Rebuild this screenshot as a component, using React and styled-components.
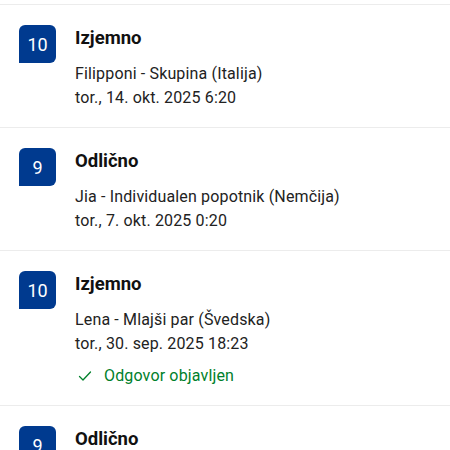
import React from 'react';
import styled, { createGlobalStyle } from 'styled-components';

const GlobalStyle = createGlobalStyle`
	html, body {
		margin: 0;
		padding: 0;
		background: #ffffff;
		font-family: Roboto, "Noto Sans", "Liberation Sans", sans-serif;
	}
	body {
		overflow: hidden;
	}
`

const Page = styled.div`
	width: 450px;
	height: 450px;
	overflow: hidden;
	background: #ffffff;
	padding-top: 4px;
	box-sizing: border-box;
`

const Review = styled.div`
	display: flex;
	align-items: flex-start;
	gap: 19px;
	padding: 20px 16px 17px 19px;
	border-top: 1px solid #ececec;
`

const Score = styled.div`
	flex: none;
	width: 37px;
	height: 38px;
	display: flex;
	align-items: center;
	justify-content: center;
	background: #003a8f;
	color: #ffffff;
	font-size: 18px;
	border-radius: 6px 6px 6px 0;
`

const Content = styled.div`
	padding-top: 1px;
	display: flex;
	flex-direction: column;
	color: #1a1a1a;
`

const Title = styled.div`
	font-size: 18.5px;
	font-weight: 700;
	line-height: 24px;
	margin-bottom: 12px;
	color: #111111;
`

const Line = styled.div`
	font-size: 16px;
	letter-spacing: 0.15px;
	line-height: 24px;
	color: #222222;
`

const Reply = styled.div`
	display: flex;
	align-items: center;
	gap: 12px;
	margin-top: 8px;
	padding-left: 3px;
	font-size: 16px;
	letter-spacing: 0.15px;
	line-height: 24px;
	color: #00802b;
`

const Check = () => (
	<svg width="14" height="14" viewBox="0 0 14 14" fill="none">
		<path d="M1.5 7.5 L5 11 L12.5 3" stroke="#00802b" strokeWidth="1.3" strokeLinecap="round" strokeLinejoin="round" />
	</svg>
)

const reviews = [
	{ score: 10, title: 'Izjemno', guest: 'Filipponi - Skupina (Italija)', date: 'tor., 14. okt. 2025 6:20' },
	{ score: 9, title: 'Odlično', guest: 'Jia - Individualen popotnik (Nemčija)', date: 'tor., 7. okt. 2025 0:20' },
	{ score: 10, title: 'Izjemno', guest: 'Lena - Mlajši par (Švedska)', date: 'tor., 30. sep. 2025 18:23', replied: true },
	{ score: 9, title: 'Odlično' },
]

export default function App() {
	return (
		<Page>
			<GlobalStyle />
			{reviews.map((r, i) => (
				<Review key={i}>
					<Score>{r.score}</Score>
					<Content>
						<Title>{r.title}</Title>
						{r.guest && <Line>{r.guest}</Line>}
						{r.date && <Line>{r.date}</Line>}
						{r.replied && (
							<Reply>
								<Check />
								<span>Odgovor objavljen</span>
							</Reply>
						)}
					</Content>
				</Review>
			))}
		</Page>
	)
}
